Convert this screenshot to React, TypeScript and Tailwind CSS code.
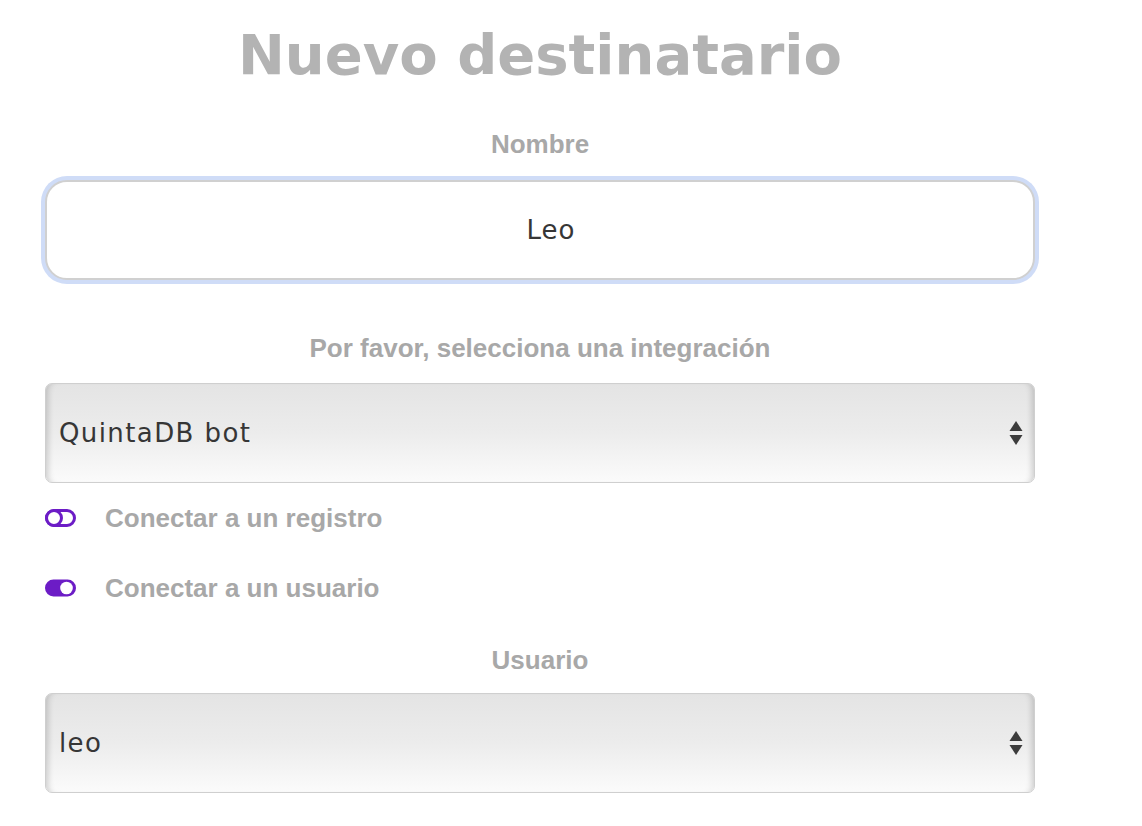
import React from "react";

const labelFont = { fontFamily: '"Liberation Sans", Arial, sans-serif' };

function Arrows() {
  return (
    <svg width="14" height="24" viewBox="0 0 14 24" className="absolute right-[11px] top-1/2 -translate-y-1/2">
      <polygon points="7,0 13.5,10 0.5,10" fill="#3c3c3c" />
      <polygon points="0.5,14 13.5,14 7,24" fill="#3c3c3c" />
    </svg>
  );
}

function Select({ value }: { value: string }) {
  return (
    <div className="relative h-[100px] w-full rounded-[7px] border border-[#cfcfcf] bg-gradient-to-b from-[#e4e4e4] via-[#ececec] to-[#fbfbfb] shadow-[inset_7px_0_6px_-5px_rgba(0,0,0,0.18),inset_-7px_0_6px_-5px_rgba(0,0,0,0.18)] flex items-center pl-[13px]">
      <span className="text-[26px] tracking-[1.4px] text-[#363636]" style={{ fontFamily: '"DejaVu Sans", sans-serif' }}>
        {value}
      </span>
      <Arrows />
    </div>
  );
}

function ToggleOff() {
  return (
    <svg width="31" height="18" viewBox="0 0 31 18">
      <rect x="1.5" y="1.5" width="28" height="15" rx="7.5" fill="#fff" stroke="#6c1cc6" strokeWidth="3" />
      <circle cx="9" cy="9" r="7.5" fill="#fff" stroke="#6c1cc6" strokeWidth="3" />
    </svg>
  );
}

function ToggleOn() {
  return (
    <svg width="31" height="18" viewBox="0 0 31 18">
      <rect x="0" y="0.5" width="31" height="17" rx="8.5" fill="#6c1cc6" />
      <circle cx="21.5" cy="9" r="6.3" fill="#fff" />
    </svg>
  );
}

function Label({ children, className }: { children: React.ReactNode; className: string }) {
  return (
    <div
      className={`h-[30px] leading-[30px] text-center text-[26px] font-bold text-[#a8a8a8] ${className}`}
      style={labelFont}
    >
      {children}
    </div>
  );
}

export default function App() {
  return (
    <div className="min-h-[826px] w-[1142px] bg-white">
      <div className="ml-[45px] w-[990px] flex flex-col">
        <h1
          className="h-[110px] leading-[110px] text-center text-[56px] font-bold text-[#b3b3b3]"
          style={{ fontFamily: '"DejaVu Sans", sans-serif' }}
        >
          Nuevo destinatario
        </h1>
        <Label className="mt-[19px] mb-[21px]">Nombre</Label>
        <div className="h-[100px] w-full rounded-[22px] border-2 border-[#d0d0d0] bg-white shadow-[0_0_0_4px_#cfdcf7] flex items-center justify-center pl-[22px]">
          <span className="text-[26px] tracking-[1px] text-[#363636]" style={{ fontFamily: '"DejaVu Sans", sans-serif' }}>
            Leo
          </span>
        </div>
        <Label className="mt-[53px] mb-[20px]">Por favor, selecciona una integración</Label>
        <Select value="QuintaDB bot" />
        <div className="mt-[20px] h-[30px] flex items-center">
          <ToggleOff />
          <span className="ml-[29px] text-[26px] font-bold text-[#a8a8a8]" style={labelFont}>
            Conectar a un registro
          </span>
        </div>
        <div className="mt-[40px] h-[30px] flex items-center">
          <ToggleOn />
          <span className="ml-[29px] text-[26px] font-bold text-[#a8a8a8]" style={labelFont}>
            Conectar a un usuario
          </span>
        </div>
        <Label className="mt-[42px] mb-[18px]">Usuario</Label>
        <Select value="leo" />
      </div>
    </div>
  );
}
